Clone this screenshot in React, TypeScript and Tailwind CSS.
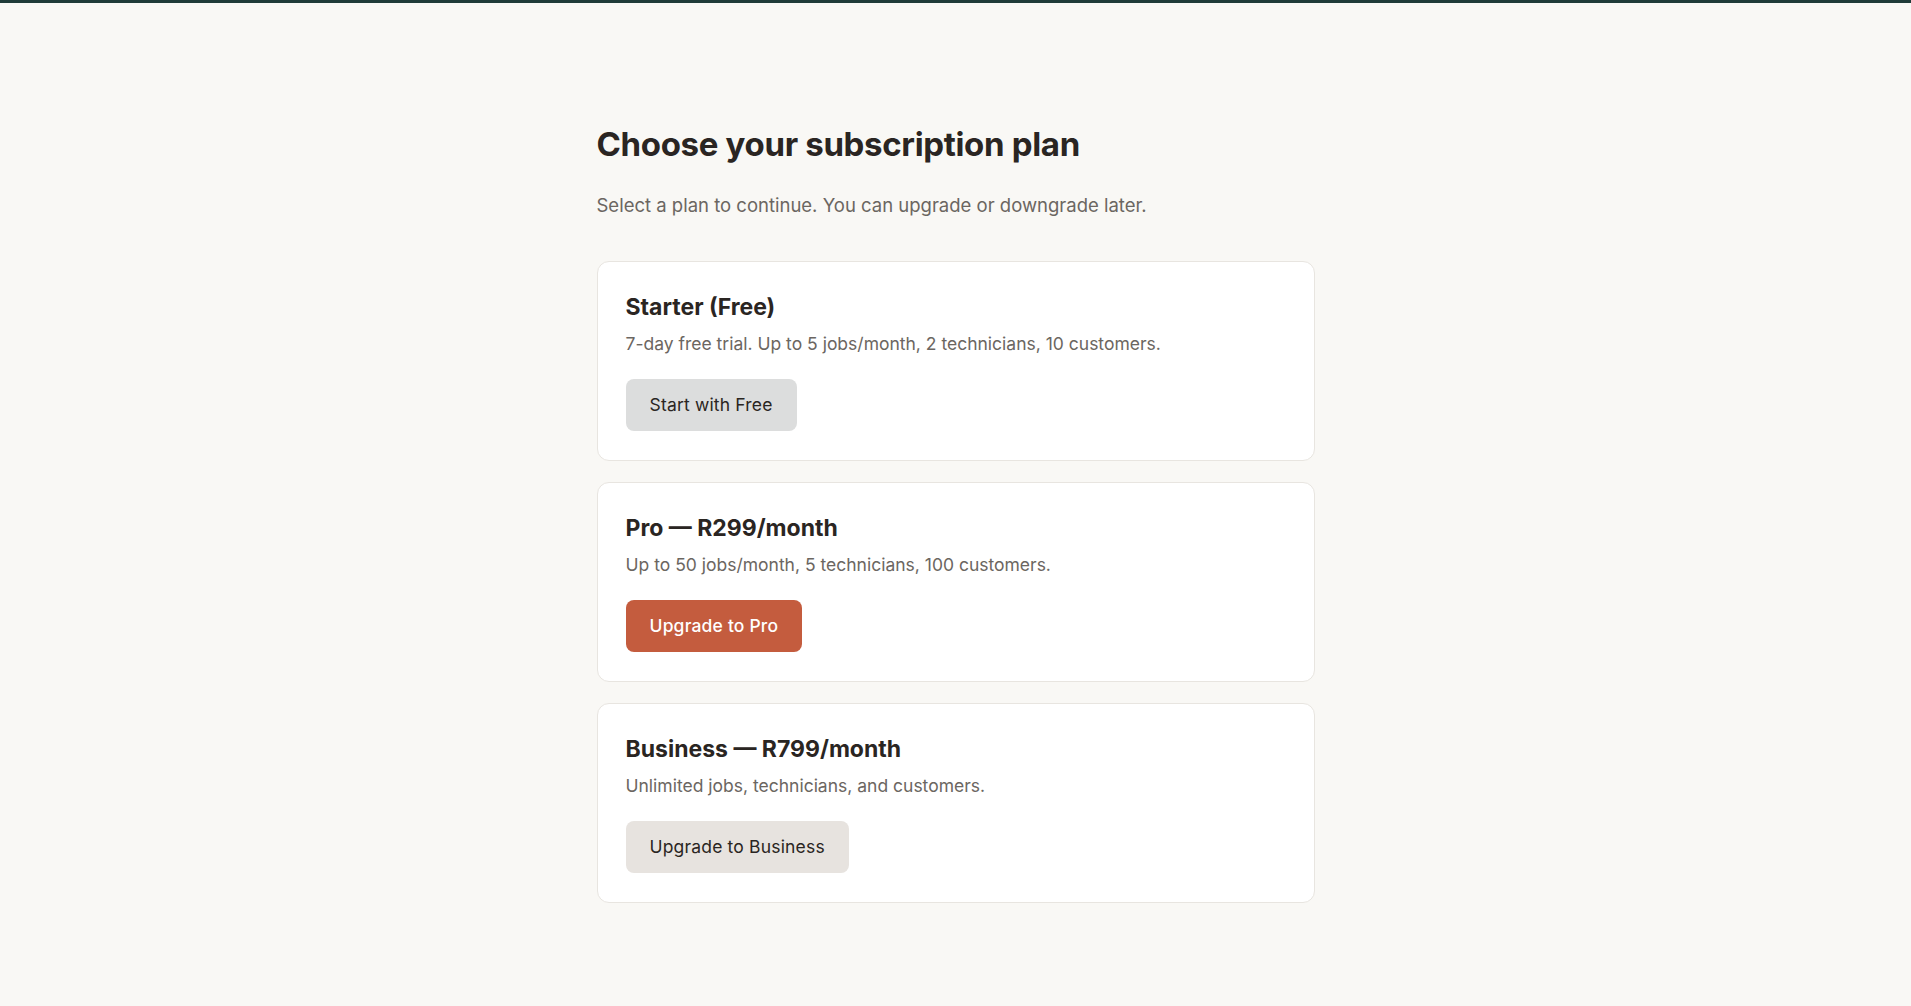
import React from 'react';

const plans = [
  {
    name: 'Starter (Free)',
    info: '7-day free trial. Up to 5 jobs/month, 2 technicians, 10 customers.',
    cta: 'Start with Free',
    btn: 'bg-[#dcdddd] text-[#2a2522]',
  },
  {
    name: 'Pro — R299/month',
    info: 'Up to 50 jobs/month, 5 technicians, 100 customers.',
    cta: 'Upgrade to Pro',
    btn: 'bg-[#c45c3e] text-white font-medium',
  },
  {
    name: 'Business — R799/month',
    info: 'Unlimited jobs, technicians, and customers.',
    cta: 'Upgrade to Business',
    btn: 'bg-[#e7e3df] text-[#2a2522]',
  },
];

export default function App() {
  return (
    <div className="min-h-screen bg-[#f9f8f5] border-t-[3px] border-[#1f3b38] font-['Inter',sans-serif] text-[#2a2522]">
      <div className="mx-auto max-w-[718px] pt-[121px]">
        <h1 className="text-[33px] leading-[40px] font-bold tracking-[-0.01em]">Choose your subscription plan</h1>
        <p className="mt-[27px] text-[18.5px] leading-[28px] text-[#6b6661]">
          Select a plan to continue. You can upgrade or downgrade later.
        </p>
        <div className="mt-[42px] flex flex-col gap-[21px]">
          {plans.map((p) => (
            <div key={p.name} className="rounded-xl border border-[#e8e5e0] bg-white px-7 pt-[31px] pb-[29px]">
              <h2 className="text-[23px] leading-[28px] font-bold">{p.name}</h2>
              <p className="mt-[11px] text-[17.5px] leading-[24px] text-[#6b6661]">{p.info}</p>
              <button className={`mt-[23px] h-[52px] rounded-lg px-6 text-[17.5px] tracking-[0.01em] ${p.btn}`}>{p.cta}</button>
            </div>
          ))}
        </div>
      </div>
    </div>
  );
}
